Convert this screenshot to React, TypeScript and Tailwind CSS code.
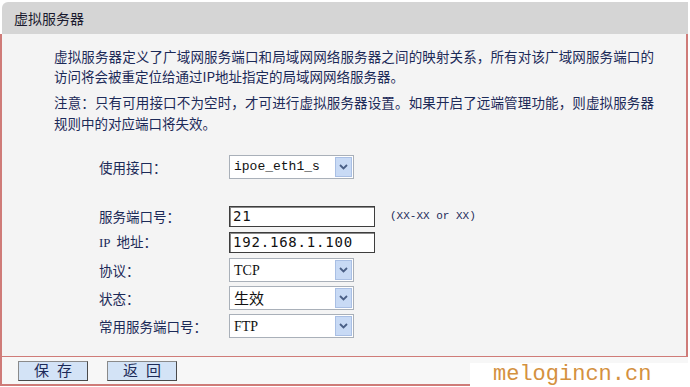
import React from "react";

const cjk = '"Noto Sans CJK SC", "Noto Sans", sans-serif';

function Chevron() {
  return (
    <svg width="9" height="6" viewBox="0 0 9 6">
      <path d="M1 1 L4.5 4.5 L8 1" fill="none" stroke="#4a5f86" strokeWidth="1.8" />
    </svg>
  );
}

function Select({ value, valueClass }: { value: string; valueClass: string }) {
  return (
    <div className="w-[125px] h-[24px] border border-[#a9b0b9] bg-white flex items-center justify-between pl-[4px] pr-[1px]">
      <span className={valueClass}>{value}</span>
      <div className="w-[17px] h-[20px] bg-[#c8daf5] border border-[#a9bfe4] flex items-center justify-center">
        <Chevron />
      </div>
    </div>
  );
}

function TextInput({ value }: { value: string }) {
  return (
    <div className="w-[146px] h-[21px] border border-[#3d3d3d] shadow-[inset_1px_1px_0_#8a8a8a] bg-white flex items-center pl-[3px]">
      <span className="text-[14px] tracking-[0.8px] text-[#111]" style={{ fontFamily: '"DejaVu Sans Mono", monospace' }}>
        {value}
      </span>
    </div>
  );
}

export default function App() {
  return (
    <div
      className="relative w-[690px] h-[387px] bg-white overflow-hidden text-[#1c2a58]"
      style={{ fontFamily: cjk }}
    >
      <div className="pt-[2px]">
        {/* header */}
        <div className="ml-[2px] mr-[2px] h-[32px] bg-[#d5d5d5] rounded-tl-[6px] flex items-center pl-[12px] text-[14px] text-[#1a1a2e]">
          虚拟服务器
        </div>
        {/* body */}
        <div className="w-[688px] h-[323px] bg-[#f4f4f4] border-l-2 border-r-2 border-b border-[#cf7b78] pt-[12px]">
          <div className="pl-[52px] text-[13.5px] leading-[20px]">
            <div className="w-[600px] text-justify [text-align-last:justify]">
              虚拟服务器定义了广域网服务端口和局域网网络服务器之间的映射关系，所有对该广域网服务端口的
            </div>
            <div>访问将会被重定位给通过IP地址指定的局域网网络服务器。</div>
            <div className="mt-[6px] leading-[21px]">
              <div className="w-[600px] text-justify [text-align-last:justify]">
                注意：只有可用接口不为空时，才可进行虚拟服务器设置。如果开启了远端管理功能，则虚拟服务器
              </div>
              <div>规则中的对应端口将失效。</div>
            </div>
          </div>

          <div className="mt-[20px] text-[13.5px]">
            <div className="flex items-center h-[26px]">
              <div className="w-[227px] pl-[97px]">使用接口：</div>
              <Select
                value="ipoe_eth1_s"
                valueClass="text-[13px] text-[#111] font-['Liberation_Mono',monospace]"
              />
            </div>
            <div className="h-[23px]" />
            <div className="flex items-center h-[26px]">
              <div className="w-[227px] pl-[97px]">服务端口号：</div>
              <TextInput value="21" />
              <span
                className="ml-[15px] text-[11px] text-[#1c2a58]"
                style={{ fontFamily: '"Liberation Mono", monospace' }}
              >
                (XX-XX or XX)
              </span>
            </div>
            <div className="flex items-center h-[26px]">
              <div className="w-[227px] pl-[97px]">
                <span className="text-[13px] mr-[6px]" style={{ fontFamily: '"Liberation Serif", serif' }}>IP</span>地址：
              </div>
              <TextInput value="192.168.1.100" />
            </div>
            <div className="flex items-center h-[28px] mt-[1px]">
              <div className="w-[227px] pl-[97px]">协议：</div>
              <Select value="TCP" valueClass="text-[14px] text-[#111] font-['Liberation_Serif',serif]" />
            </div>
            <div className="flex items-center h-[28px]">
              <div className="w-[227px] pl-[97px]">状态：</div>
              <Select value="生效" valueClass="text-[15px] text-[#111]" />
            </div>
            <div className="flex items-center h-[28px]">
              <div className="w-[227px] pl-[97px]">常用服务端口号：</div>
              <Select value="FTP" valueClass="text-[14px] text-[#111] font-['Liberation_Serif',serif]" />
            </div>
          </div>
        </div>
        {/* footer */}
        <div className="w-[688px] h-[29px] bg-[#f7f7f7] border-l-2 border-b-2 border-[#cf7b78] flex items-center pl-[16px] gap-[19px]">
          <div className="w-[70px] h-[20px] bg-[#d3e3f6] border border-[#4a4a4a] border-t-[#8a8a8a] border-l-[#8a8a8a] flex items-center justify-center text-[15px] tracking-[8px] pl-[8px] text-[#1c2a58]">
            保存
          </div>
          <div className="w-[70px] h-[20px] bg-[#d3e3f6] border border-[#4a4a4a] border-t-[#8a8a8a] border-l-[#8a8a8a] flex items-center justify-center text-[15px] tracking-[8px] pl-[8px] text-[#1c2a58]">
            返回
          </div>
        </div>
      </div>
      {/* watermark */}
      <div className="absolute left-[470px] top-[363px] w-[220px] h-[24px] bg-white flex items-center pl-[23px]">
        <span
          className="text-[22px] leading-[24px] text-[#d4913f]"
          style={{ fontFamily: '"Liberation Mono", monospace' }}
        >
          melogincn.cn
        </span>
      </div>
    </div>
  );
}
